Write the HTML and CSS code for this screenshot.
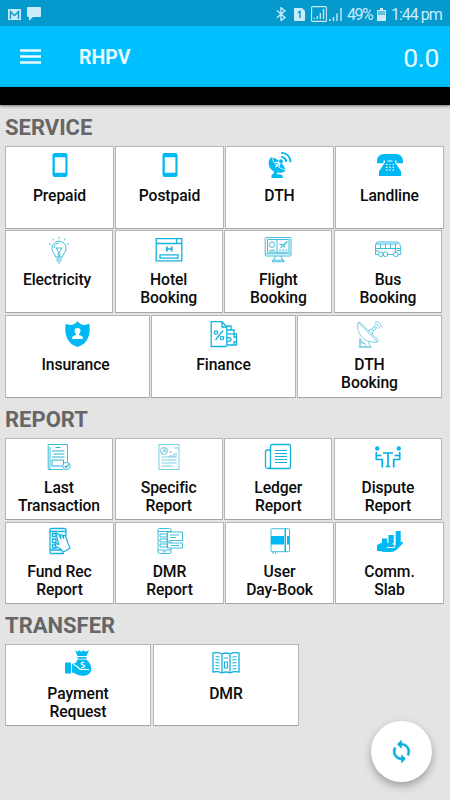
FILE: index.html
```html
<!DOCTYPE html>
<html lang="en">
<head>
<meta charset="utf-8">
<title>RHPV</title>
<link rel="stylesheet" href="styles.css">
</head>
<body>
<div class="status">
  <svg class="s-mail" viewBox="0 0 13 11"><path fill="#c9ecf8" d="M0 0h13v11H0z"/><path d="M2.500 10V2.500l4 4 4-4V10" fill="none" stroke="#159ccd" stroke-width="1.500"/></svg>
  <svg class="s-chat" viewBox="0 0 14 14"><path fill="#c9ecf8" d="M1 0h12q1 0 1 1v8q0 1-1 1H6l-4 4v-4H1q-1 0-1-1V1q0-1 1-1z"/></svg>
  <svg class="s-bt" viewBox="0 0 10 14"><path d="M1 3.500l8 7-4 3V.8l4 3-8 7" fill="none" stroke="#c9ecf8" stroke-width="1.400"/></svg>
  <svg class="s-sim" viewBox="0 0 11 13"><path fill="#c9ecf8" d="M1 0h7l3 3v9q0 1-1 1H1q-1 0-1-1V1q0-1 1-1z"/><path d="M4 4.500l2-1V10" fill="none" stroke="#159ccd" stroke-width="1.500"/></svg>
  <svg class="s-box" viewBox="0 0 16 16"><rect x=".6" y=".6" width="14.800" height="14.800" rx="1" fill="none" stroke="#c9ecf8" stroke-width="1.100"/><path d="M3.500 13v-1M6.300 13v-3M9.300 13V7M12.500 13V3" stroke="#c9ecf8" stroke-width="1.300"/></svg>
  <svg class="s-sig" viewBox="0 0 13 13"><path d="M1 13v-2M4.500 13V9M8 13V5.500M12 13V0" stroke="#c9ecf8" stroke-width="1.400"/></svg>
  <span class="s-pct">49%</span>
  <svg class="s-bat" viewBox="0 0 9 13"><path fill="#c9ecf8" d="M3 0h3v2h3v11H0V2h3z"/><path fill="#66bfdf" d="M1 3h7v4H1z"/></svg>
  <span class="s-time">1:44 pm</span>
</div>
<header class="bar">
  <svg class="menu" viewBox="0 0 21 15"><path d="M0 1.500h21M0 7.500h21M0 13.500h21" stroke="#e6faff" stroke-width="2.400"/></svg>
  <h1>RHPV</h1>
  <span class="balance">0.0</span>
</header>
<div class="ticker"></div>
<main>
  <h2>SERVICE</h2>
  <div class="row four">
    <div class="card"><svg viewBox="0 0 26 26"><path class="f" fill-rule="evenodd" d="M7.500 1h11q2 0 2 2v20q0 2-2 2h-11q-2 0-2-2V3q0-2 2-2zM7.800 5.200v15.600h10.600V5.200z"/></svg><p>Prepaid</p></div>
    <div class="card"><svg viewBox="0 0 26 26"><path class="f" fill-rule="evenodd" d="M7.500 1h11q2 0 2 2v20q0 2-2 2h-11q-2 0-2-2V3q0-2 2-2zM7.800 5.200v15.600h10.600V5.200z"/></svg><p>Postpaid</p></div>
    <div class="card"><svg viewBox="0 0 26 26"><path class="f" d="M4.300 4.800C-.3 9.500 1.500 17 7 19.500l-.5 2.300L4.500 23v3h11.700l-1-3-5-1-.4-1.500c4 .8 7-.2 9.200-2.300z"/><path d="M4.800 5.300c1.500 6 7 11.500 14 12.700-1.300-5.700-8-12.300-14-12.700z" fill="#00b9f2" stroke="#fff" stroke-width=".8"/><path d="M8 10.800l5.500-1.300-1.500 5M8.500 15l5-6" class="w2"/><circle cx="14" cy="9.200" r="1.900" class="f"/><path d="M14 5c2.500-.3 5.300 2 5.200 5M14.200 1c5-.5 9.500 4 9.300 9.300" fill="none" stroke="#00b9f2" stroke-width="1.800"/></svg><p>DTH</p></div>
    <div class="card"><svg viewBox="0 0 26 26"><path class="f" d="M0 9c0-4 3-7 7-7h12c4 0 7 3 7 7v2.300h-6.500V8.500h-13v2.800H0z"/><path class="f" d="M8 7.500h2.500v2h5v-2H18v2.800l6 9V24H2v-4.700l6-9z"/><path d="M9 12.500h8M9 15.300h8M9 18.100h8" stroke="#fff" stroke-width="1.200" stroke-dasharray="1.400 1.900"/></svg><p>Landline</p></div>
  </div>
  <div class="row four narrow lower">
    <div class="card shift"><svg viewBox="0 0 26 26"><g class="l"><path d="M9.500 20c0-3-3.600-4.500-3.600-8.700a7.100 7.100 0 0 1 14.200 0c0 4.200-3.600 5.700-3.600 8.700zM8 11c0-2.700 2-4.500 4.500-4.700M10 11h6l-2.200 3.500V20M10 11l2.200 3.500V20M10 22h6M10.500 24h5M12 26h2M13 .2v2M6.800 1.500l.9 1.800M3 6.500l1.800.8M19.200 1.500l-.9 1.800M23 6.500l-1.800.8"/></g></svg><p>Electricity</p></div>
    <div class="card"><svg viewBox="0 0 26 26"><g class="m"><path d="M.2 1.700h25.600v22.100H.2zM.2 6.500h25.600M20.500 2v4.500"/><path d="M4 17.800h18v3.300H4z"/><path d="M10.800 9.500v5M15.700 9.500v5M10.800 12h5" stroke-width="1.700"/></g></svg><p>Hotel<br>Booking</p></div>
    <div class="card"><svg viewBox="0 0 26 26"><g class="l"><rect x=".2" y=".5" width="25.800" height="18.500" rx="1"/><path d="M2.500 2.500H24v12.700H2.500zM.5 16.800H26M12 3v12M10.500 19.200l-1.500 4M16 19.200l1.500 4M7.500 23.200h11.500v1.600H7.500zM4.500 13.300h5.500"/><circle cx="7" cy="7.700" r="2.700"/><path d="M14 13h9" stroke-dasharray="2 1"/><path d="M14.500 7l3.800 1.300L22.500 4.500M15.500 10.700l5.500-5M18.500 8l1.200 2.500" stroke-width="1.100"/></g></svg><p>Flight<br>Booking</p></div>
    <div class="card"><svg viewBox="0 0 26 26"><g class="l"><path d="M3 17.500H.5V8q0-3 3-3H21c2.500 0 4 1 4.300 4l.5 6v2.500h-3M18.500 17.500h-6M1 7h22M1 11.500h24.500M1 14h3M5.500 7v4.500M10.500 7v4.500M15.500 7v4.500M20.500 7v9M25 13.500h-3"/><circle cx="5.800" cy="17.200" r="2.400"/><circle cx="10.500" cy="17.200" r="2.400"/><circle cx="20.800" cy="17.200" r="2.400"/></g></svg><p>Bus<br>Booking</p></div>
  </div>
  <div class="row three">
    <div class="card shift"><svg viewBox="0 0 26 26"><path class="f" d="M12.500 0c1.800 2.500 3.500 3.700 6.500 3.900 1.800.1 3.500-.3 5.300-1.400.7 6 .7 10-1.300 14.500-2 4.500-5.500 7.500-10.500 9-5-1.500-8.500-4.500-10.500-9C0 12.500 0 8.500.7 2.500 2.500 3.600 4.200 4 6 3.900c3-.2 4.700-1.400 6.500-3.900z"/><circle cx="12.500" cy="10" r="3" fill="#fff"/><path fill="#fff" d="M11 12h3v2l2.800 1q1.200.6 1.200 3H7q0-2.400 1.200-3l2.800-1z"/></svg><p>Insurance</p></div>
    <div class="card"><svg viewBox="0 0 26 26"><g class="m"><path d="M15.500 25.500H.2V.7h10.800l4.800 5v19.600M11 1v5h5"/><circle cx="5" cy="11.500" r="1.700"/><circle cx="11" cy="17" r="1.700"/><path d="M12 9.500L4.500 19M16 5h4v4.500M16 9h7v4M16 12.800h9.500V24H16M16 16.500q4 0 4 2t-4 2M23 13v3h3M23 24v-3h3"/></g></svg><p>Finance</p></div>
    <div class="card"><svg viewBox="0 0 26 26"><g class="l pale"><path d="M1.200 1.200C-1.500 11 6.500 23 20.500 21L1.200 1.200C2 1 3 1.600 4 2.500l17 16.300q1 1.200-.5 2.200M11 9.500l4.500-1.300M15 14l1.300-4.500M3 16.500v9.500h10.500l-2-5M3 26V18l7 8M3 21.500l5 1M1 26h14"/><circle cx="16.700" cy="8" r="1.600"/><path d="M17 5q2.700 0 3 3M17.500 2.800q4.500 0 5 4.700M18 .6q6 0 6.500 6"/></g></svg><p>DTH<br>Booking</p></div>
  </div>
  <h2 class="h-report">REPORT</h2>
  <div class="row four narrow rep">
    <div class="card"><svg viewBox="0 0 26 26"><g class="l"><path d="M17 25.500H2.200V.5h19.300v18M4 25V3" /><path d="M9.500 3.500h5M6 7h12.500M7.500 10h11M6 13h12.500M6 16h11.500v6H6z" stroke-width="1"/><circle cx="20.500" cy="22" r="3.700" fill="#fff"/><path d="M18.700 22l1.300 1.500 2.700-3" stroke-width="1.200"/></g></svg><p>Last<br>Transaction</p></div>
    <div class="card"><svg viewBox="0 0 26 26"><g class="l pale"><rect x="3" y=".5" width="20" height="25"/><circle cx="8" cy="7" r="3.500"/><path d="M4.500 10l7-6M8 3v4l3.500 1M5.500 13h15M5.500 16h15M5.500 19h15M5.500 22h11M13 8h3M18 4h4M17 10h4M13 12h8"/></g></svg><p>Specific<br>Report</p></div>
    <div class="card"><svg viewBox="0 0 26 26"><g class="m"><path d="M5.500 24.500V2.500q0-2 2-2h16q2 0 2 2v20q0 2-2 2H3q-2.500 0-2.500-2.500V8q0-2 2-2h3v16q0 2.500-2.500 2.500"/><path d="M10 6.500h12M10 9.500h12M10 12.500h12M10 15.500h12M10 18.500h12" stroke-width="1.100"/></g></svg><p>Ledger<br>Report</p></div>
    <div class="card"><svg viewBox="0 0 26 26"><circle cx="2.200" cy="4.500" r="2.200" class="f"/><circle cx="23.800" cy="4.500" r="2.200" class="f"/><path d="M1.300 8v7.500h6v8M2 11.500h4.500M24.700 8v7.500h-6v8M24 11.500h-4.500M8 9h10M13 9v14M10.800 22.500h4.400" fill="none" stroke="#00b0e8" stroke-width="1.700"/></svg><p>Dispute<br>Report</p></div>
  </div>
  <div class="row four rep2">
    <div class="card"><svg viewBox="0 0 26 26"><g class="m"><path d="M17 25.500H4.500q-1.500 0-1.500-1.500V2Q3 .5 4.500.5h13Q19 .5 19 2v6M3 3.500h16M3 22h12M5.500 5.500h3.500v3H5.500zM5.500 11H9v3.500H5.500zM5.500 17H9v3H5.500z" stroke-width="1.300"/><path stroke-width="1.200" fill="#fff" d="M9 5.500q2-.5 3 1.500l2 4-.8-4q1.500-1 2.300.5l1.200 3-.4-3q1.500-.7 2.300.8l2.400 7 2 5-7 4-2-3-5.300-3-.5-3 3.500 1z"/></g></svg><p>Fund Rec<br>Report</p></div>
    <div class="card"><svg viewBox="0 0 26 26"><g class="l"><rect x="1" y=".5" width="13" height="25" rx="1.500"/><path d="M1 3.500h13M1 22h13M3 6h7v3H3zM3 11h7v3H3zM3 16h7v3H3zM6 23.800h3"/><path fill="#fff" d="M10.500 4H25.500v8.500H13l-2.500 2zM10.500 15H25.500v5H10.500z"/><path d="M13 7h9M13 9.500h6M14 17.500h8"/></g></svg><p>DMR<br>Report</p></div>
    <div class="card"><svg viewBox="0 0 26 26"><g class="l"><rect x="4" y=".7" width="18.500" height="23" rx="1"/><path d="M6 24v2M8.500 24v2" /></g><path class="f" d="M4 8h13v8.500H4zM17.500.7H19v23h-1.500zM20 8h2.500v8.500H20z"/></svg><p>User<br>Day-Book</p></div>
    <div class="card"><svg viewBox="0 0 26 26"><path class="f" d="M5 10.500h5.200v5H5zM11.500 7h5.200v8.500h-5.200zM18.700 3h5v11.500l-3 2h-2zM0 17l4-2h8c3 0 4 1 5 2.500l7-3.500c1.500-.5 2.500.5 1.500 1.800l-6 6c-2 1.800-3 2.200-6 2.200H6L4 23H0z"/><path d="M10 19.500h6q2 0 1.500-2" class="w2"/></svg><p>Comm.<br>Slab</p></div>
  </div>
  <h2 class="h-transfer">TRANSFER</h2>
  <div class="row two">
    <div class="card"><svg viewBox="0 0 26 26"><path class="f" d="M10 .2l2.500 1.500L14 .2l2.200 1.500L18.500.2l2 1.500L24 .2 21.500 6h-9zM12.500 7h9v1.700h-9zM12.700 9.500h8.600c3.700 3 5 6 5 9 0 5-4 7.300-8 7.300-4.500 0-7-1-9.500-3H7V14l3.700-1zM0 12.500h5.500l.5 1v9l-.5 1H0z"/><path d="M19.500 12.500c-4-1-4 2-1.500 2.500s2 3-2 2.500M8 15c4-1 5 4 8 4.500h8" class="w2"/></svg><p>Payment<br>Request</p></div>
    <div class="card"><svg viewBox="0 0 26 26"><g class="m"><path d="M0 3q5-1 9 1 4-2 8 0 4-2 9-1v19q-5-1-9 1-4-2-8 0-4-2-9-1zM9 4v19M17 4v19"/><path stroke-width="1.100" d="M2.500 6.500l4 .5M2.500 9.500l4 .5M2.500 12.500l4 .5M2.500 15.500l4 .5M2.500 18.500l4 .5M23.500 6.500l-4 .5M23.500 9.500l-4 .5M23.500 12.500l-4 .5M23.500 15.500l-4 .5M23.500 18.500l-4 .5M11 8h4M11.500 12h3v6h-3z"/></g></svg><p>DMR</p></div>
  </div>
</main>
<button class="fab" aria-label="Refresh"><svg viewBox="0 0 24 24"><path fill="#0ab0dc" stroke="#0ab0dc" stroke-width=".5" d="M12 4V1L8 5l4 4V6c3.310 0 6 2.690 6 6 0 1.010-.25 1.970-.7 2.800l1.460 1.460C19.540 15.030 20 13.570 20 12c0-4.420-3.580-8-8-8zm0 14c-3.310 0-6-2.690-6-6 0-1.010.25-1.970.7-2.800L5.240 7.740C4.460 8.970 4 10.430 4 12c0 4.420 3.580 8 8 8v3l4-4-4-4v3z"/></svg></button>
</body>
</html>
```
FILE: styles.css
```css
* { box-sizing: border-box; }
body {
  margin: 0;
  width: 450px;
  height: 800px;
  overflow: hidden;
  background: #e4e4e4;
  font-family: Roboto, "Liberation Sans", sans-serif;
}
h1, h2, p { margin: 0; }
svg { display: block; flex: none; }

.status {
  height: 26px;
  padding: 2px 9px 0 8px;
  display: flex;
  align-items: center;
  background: #0599cd;
  color: #c9ecf8;
  font-size: 16px;
  line-height: 24px;
  white-space: nowrap;
}
.s-mail { width: 13px; height: 11px; }
.s-chat { width: 14px; height: 14px; margin-left: 6px; }
.s-bt { width: 10px; height: 14px; margin-left: auto; }
.s-sim { width: 11px; height: 13px; margin-left: 8px; }
.s-box { width: 16px; height: 16px; margin-left: 6px; }
.s-sig { width: 13px; height: 13px; margin-left: 2px; }
.s-pct { width: 26px; margin: 1px 0 0 5px; letter-spacing: -1.5px; }
.s-bat { width: 9px; height: 13px; margin-left: 4px; }
.s-time { width: 50px; margin: 1px 0 0 5px; letter-spacing: -1px; }

.bar {
  height: 61px;
  padding: 0 11px 0 20px;
  display: flex;
  align-items: center;
  background: #00bfff;
  color: #e6faff;
}
.menu { width: 21px; height: 15px; }
.bar h1 {
  margin: 3px 0 0 38px;
  font-size: 19.500px;
  line-height: 24px;
  font-weight: 700;
}
.balance {
  margin: 3px 0 0 auto;
  font-size: 26.500px;
  line-height: 30px;
  letter-spacing: -0.3px;
}
.ticker {
  height: 18px;
  background: #000;
  box-shadow: 0 1px 3px rgba(0, 0, 0, .5);
}

main { padding: 8px 0 0 5px; }
h2 {
  height: 33px;
  padding-top: 1px;
  font-size: 22px;
  line-height: 28px;
  font-weight: 700;
  color: #666;
}
.h-report { margin-top: 7px; }
.h-transfer { margin-top: 7px; }

.row { display: grid; height: 83px; }
.four { grid-template-columns: repeat(4, 109px); gap: 1px; }
.narrow { grid-template-columns: repeat(4, 108px); gap: 1.670px; }
.three { grid-template-columns: repeat(3, 145px); gap: 1px; margin-top: 2px; }
.two { grid-template-columns: 146px 146px; gap: 2px; }
.lower { margin-top: 1px; }
.rep { height: 82px; }
.rep2 { height: 82px; margin-top: 2px; }
.two { height: 82px; }

.card {
  padding-top: 5px;
  display: flex;
  flex-direction: column;
  align-items: center;
  background: #fff;
  border: 1px solid #b5b5b5;
  border-bottom-color: #a5a5a5;
}
.lower .card { padding-top: 6px; }
.card svg { width: 26px; height: 26px; overflow: visible; }
.card p {
  margin-top: 9px;
  font-size: 15.700px;
  line-height: 18px;
  font-weight: 500;
  letter-spacing: -0.1px;
  text-align: center;
  color: #0c0c0c;
}
.lower .card p { margin-top: 8px; }
.shift p { padding-right: 4px; }

.f { fill: #00b9f2; }
.l, .m { fill: none; stroke: #2bb5d8; stroke-width: .9; }
.m { stroke: #13b2df; stroke-width: 1.300; }
.pale { stroke: #5bc3dc; stroke-width: .8; }
.w2 { fill: none; stroke: #fff; stroke-width: 1.200; }

.fab {
  position: fixed;
  left: 371px;
  top: 721px;
  width: 61px;
  height: 61px;
  padding: 0;
  display: flex;
  align-items: center;
  justify-content: center;
  border: 0;
  border-radius: 50%;
  background: #fff;
  box-shadow: 0 4px 8px rgba(0, 0, 0, .3);
}
.fab svg { width: 25px; height: 25px; }
```
